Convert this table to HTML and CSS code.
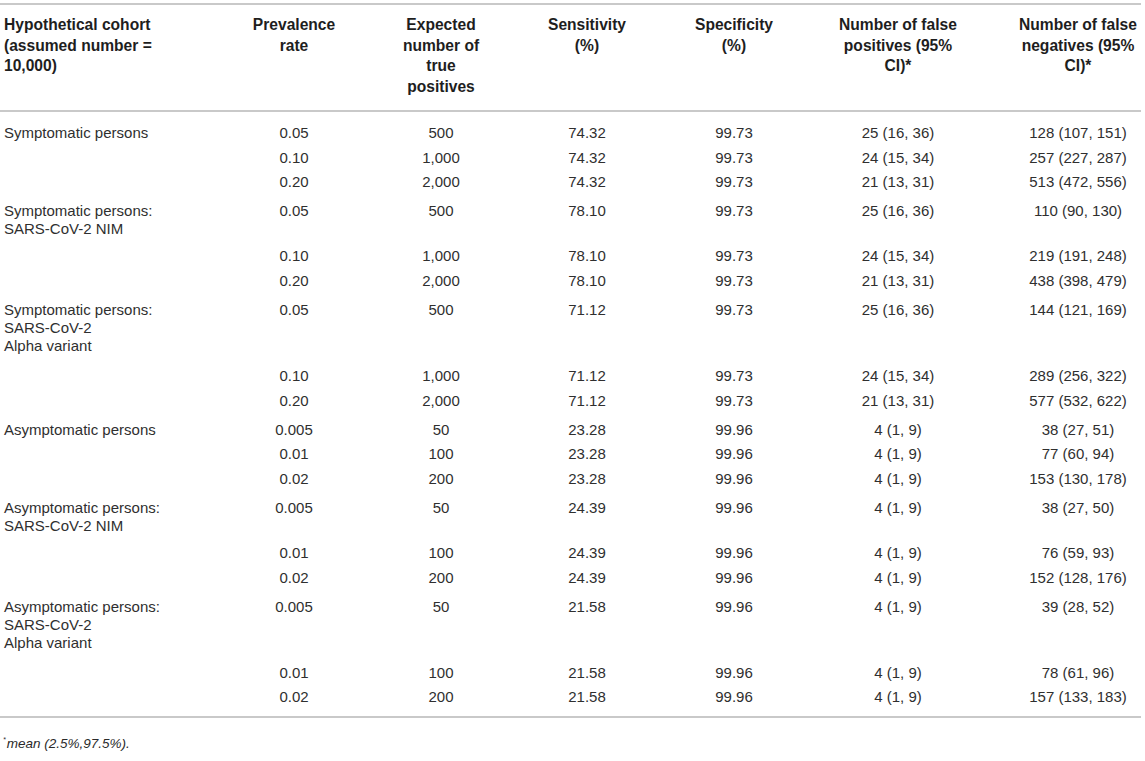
FILE: index.html
```html
<!DOCTYPE html>
<html lang="en">
<head>
<meta charset="utf-8">
<title>Hypothetical cohort table</title>
<link rel="stylesheet" href="styles.css">
</head>
<body>
<div class="wrap">
<table class="data">
  <colgroup>
    <col class="c1"><col class="c2"><col class="c3"><col class="c4"><col class="c5"><col class="c6"><col class="c7">
  </colgroup>
  <thead>
    <tr>
      <th class="first">Hypothetical cohort<br>(assumed number =<br>10,000)</th>
      <th>Prevalence<br>rate</th>
      <th>Expected<br>number of<br>true<br>positives</th>
      <th>Sensitivity<br>(%)</th>
      <th>Specificity<br>(%)</th>
      <th>Number of false<br>positives (95%<br>CI)*</th>
      <th class="last">Number of false<br>negatives (95%<br>CI)*</th>
    </tr>
  </thead>
  <tbody>
    <tr class="grp"><td class="first">Symptomatic persons</td><td>0.05</td><td>500</td><td>74.32</td><td>99.73</td><td>25 (16, 36)</td><td class="last">128 (107, 151)</td></tr>
    <tr><td class="first"></td><td>0.10</td><td>1,000</td><td>74.32</td><td>99.73</td><td>24 (15, 34)</td><td class="last">257 (227, 287)</td></tr>
    <tr><td class="first"></td><td>0.20</td><td>2,000</td><td>74.32</td><td>99.73</td><td>21 (13, 31)</td><td class="last">513 (472, 556)</td></tr>
    <tr class="grp ml2"><td class="first">Symptomatic persons:<br>SARS-CoV-2 NIM</td><td>0.05</td><td>500</td><td>78.10</td><td>99.73</td><td>25 (16, 36)</td><td class="last">110 (90, 130)</td></tr>
    <tr><td class="first"></td><td>0.10</td><td>1,000</td><td>78.10</td><td>99.73</td><td>24 (15, 34)</td><td class="last">219 (191, 248)</td></tr>
    <tr><td class="first"></td><td>0.20</td><td>2,000</td><td>78.10</td><td>99.73</td><td>21 (13, 31)</td><td class="last">438 (398, 479)</td></tr>
    <tr class="grp ml3"><td class="first">Symptomatic persons:<br>SARS-CoV-2<br>Alpha variant</td><td>0.05</td><td>500</td><td>71.12</td><td>99.73</td><td>25 (16, 36)</td><td class="last">144 (121, 169)</td></tr>
    <tr><td class="first"></td><td>0.10</td><td>1,000</td><td>71.12</td><td>99.73</td><td>24 (15, 34)</td><td class="last">289 (256, 322)</td></tr>
    <tr><td class="first"></td><td>0.20</td><td>2,000</td><td>71.12</td><td>99.73</td><td>21 (13, 31)</td><td class="last">577 (532, 622)</td></tr>
    <tr class="grp"><td class="first">Asymptomatic persons</td><td>0.005</td><td>50</td><td>23.28</td><td>99.96</td><td>4 (1, 9)</td><td class="last">38 (27, 51)</td></tr>
    <tr><td class="first"></td><td>0.01</td><td>100</td><td>23.28</td><td>99.96</td><td>4 (1, 9)</td><td class="last">77 (60, 94)</td></tr>
    <tr><td class="first"></td><td>0.02</td><td>200</td><td>23.28</td><td>99.96</td><td>4 (1, 9)</td><td class="last">153 (130, 178)</td></tr>
    <tr class="grp ml2"><td class="first">Asymptomatic persons:<br>SARS-CoV-2 NIM</td><td>0.005</td><td>50</td><td>24.39</td><td>99.96</td><td>4 (1, 9)</td><td class="last">38 (27, 50)</td></tr>
    <tr><td class="first"></td><td>0.01</td><td>100</td><td>24.39</td><td>99.96</td><td>4 (1, 9)</td><td class="last">76 (59, 93)</td></tr>
    <tr><td class="first"></td><td>0.02</td><td>200</td><td>24.39</td><td>99.96</td><td>4 (1, 9)</td><td class="last">152 (128, 176)</td></tr>
    <tr class="grp ml3"><td class="first">Asymptomatic persons:<br>SARS-CoV-2<br>Alpha variant</td><td>0.005</td><td>50</td><td>21.58</td><td>99.96</td><td>4 (1, 9)</td><td class="last">39 (28, 52)</td></tr>
    <tr><td class="first"></td><td>0.01</td><td>100</td><td>21.58</td><td>99.96</td><td>4 (1, 9)</td><td class="last">78 (61, 96)</td></tr>
    <tr><td class="first"></td><td>0.02</td><td>200</td><td>21.58</td><td>99.96</td><td>4 (1, 9)</td><td class="last">157 (133, 183)</td></tr>
  </tbody>
</table>
<p class="note"><sup>*</sup>mean (2.5%,97.5%).</p>
</div>
</body>
</html>
```

FILE: styles.css
```css
html, body {
  margin: 0;
  padding: 0;
  background: #ffffff;
}
body {
  font-family: "Liberation Sans", Arial, sans-serif;
  color: #2a2a2a;
}
.wrap {
  padding-top: 3px;
  width: 1141px;
}
.data {
  width: 1141px;
  border-collapse: collapse;
  table-layout: fixed;
  font-size: 15px;
  line-height: 18px;
  border-top: 2px solid #c9c9c9;
  border-bottom: 2px solid #c9c9c9;
}
.c1 { width: 220px; }
.c2 { width: 148px; }
.c3 { width: 146px; }
.c4 { width: 146px; }
.c5 { width: 148px; }
.c6 { width: 180px; }
.c7 { width: 153px; }
.data th {
  font-size: 15.6px;
  line-height: 20.5px;
  font-weight: bold;
  color: #1e1e1e;
  text-align: center;
  vertical-align: top;
  padding: 10px 2px 13px;
  border-bottom: 2px solid #c9c9c9;
}
.data td {
  text-align: center;
  vertical-align: top;
  padding: 3.25px 4px;
  color: #2f2f2f;
  white-space: nowrap;
}
.data .first {
  text-align: left;
  padding-left: 4px;
}
.data .last {
  padding-left: 31px;
  padding-right: 4px;
}
.data tr.grp td {
  padding-top: 8px;
}
.data tr.ml2 td {
  padding-bottom: 5.75px;
}
.data tr.ml3 td {
  padding-bottom: 8.75px;
}
.data tbody tr:first-child td {
  padding-top: 12px;
}
.data tbody tr:last-child td {
  padding-bottom: 10px;
}
.note {
  margin: 18px 0 0 3px;
  font-size: 13.5px;
  font-style: italic;
  color: #2a2a2a;
}
.note sup {
  font-size: 7px;
  vertical-align: 6px;
  margin-right: 1px;
}
```
